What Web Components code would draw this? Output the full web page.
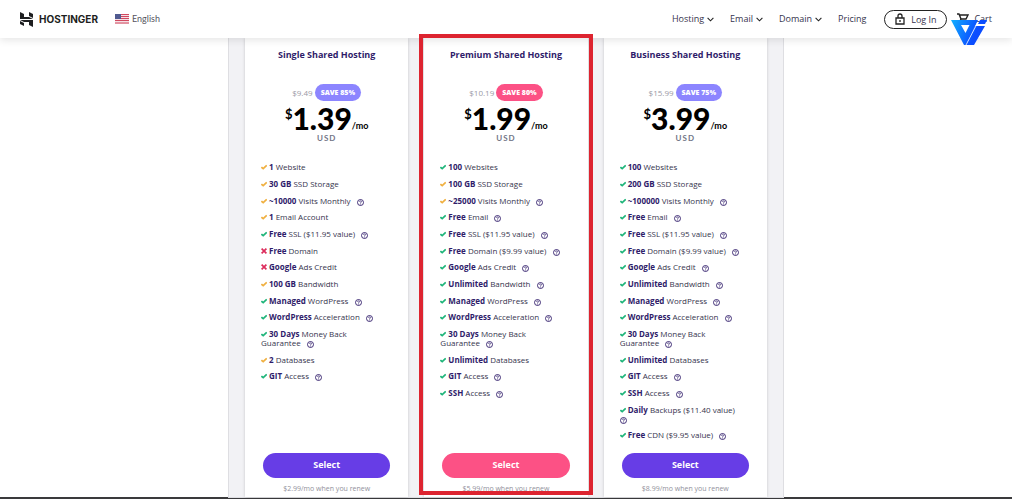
<!DOCTYPE html>
<html lang="en">
<head>
<meta charset="utf-8">
<title>Hosting plans</title>
<style>
html,body{margin:0;background:#fff}
body{font-family:"Open Sans","Noto Sans",sans-serif;color:#2f1c6a}
</style>
</head>
<body>
<hosting-page></hosting-page>
<script>
const define=(name,html,setup)=>customElements.define(name,class extends HTMLElement{
  constructor(){super();this.attachShadow({mode:'open'});}
  connectedCallback(){
    if(this.shadowRoot.childNodes.length)return;
    const t=document.createElement('template');
    t.innerHTML=typeof html==='function'?html(this):html;
    this.shadowRoot.append(t.content.cloneNode(true));
    if(setup)setup(this);
  }
});

define('status-mark',el=>{
  const kind=el.getAttribute('kind');
  return `<style>:host{display:inline-block;width:8px;height:6px}
  svg{display:block;width:6px;height:6px;fill:none;stroke-width:1.7}
  .ok{stroke:#1fb57a}.warn{stroke:#f0b040}.no{stroke:#dc2c5c}</style>
  <svg class="${kind}" viewBox="0 0 6 6" aria-hidden="true"><path d="${kind==='no'?'M.6.6 5.4 5.4M5.4.6.6 5.4':'M.4 3.1 2.2 4.7 5.7 1.3'}"/></svg>`;
});

define('help-dot',`<style>:host{display:inline-block;width:7px;height:7px;margin:-2px 0 -2px 4px}
  :host([alone]){margin-left:0}
  svg{display:block;width:7px;height:7px;fill:none;stroke:#2f1c6a}</style>
  <svg viewBox="0 0 14 14" aria-hidden="true"><circle cx="7" cy="7" r="6" stroke-width="1.8"/><path d="M5 5.6Q5.2 3.8 7 3.8T9 5.6Q9 6.6 7 7.6V8.6M7 9.6V11" stroke-width="1.5"/></svg>`);

define('nav-item',el=>`<style>:host{display:block}
  a{display:flex;align-items:center;gap:3px;color:#36344d;text-decoration:none;font-size:9px;line-height:12px}
  svg{width:7px;height:5px;fill:none;stroke:#222;stroke-width:1.1}</style>
  <a href="#"><slot></slot>${el.hasAttribute('menu')?'<svg viewBox="0 0 7 5" aria-hidden="true"><path d="M.6.8 3.5 3.8 6.4.8"/></svg>':''}</a>`);

define('site-header',`<style>
  :host{display:block;position:relative;z-index:2;background:#fff;box-shadow:0 2px 8px #0000001c}
  header{display:flex;align-items:center;height:38px;padding:0 20px}
  a{color:inherit;text-decoration:none}
  .brand{display:flex;align-items:center;gap:5px;font:700 10px/12px Inter,sans-serif;color:#1d1e20}
  .brand svg{width:14px;height:15px;display:block}
  .lang{display:flex;align-items:center;gap:3px;margin-left:17px;font:9px/12px Lato,sans-serif;color:#56555f}
  .lang svg{width:14px;height:10px;display:block}
  nav{display:flex;align-items:center;gap:16px;margin-left:auto}
  button{display:flex;align-items:center;justify-content:center;gap:6px;width:63px;height:19px;margin-left:2px;box-sizing:border-box;padding:0;border:1px solid #222;border-radius:10px;background:#fff;color:#36344d;font:inherit;font-size:9px}
  button svg{width:10px;height:12px;fill:none;stroke:#222;stroke-width:1.3}
  .cart{display:flex;align-items:center;gap:5px;font-size:9px;line-height:12px;color:#36344d;margin-left:-6px}
  .cart svg{width:12px;height:12px;fill:none;stroke:#222;stroke-width:1.4}
  </style>
  <header>
   <a class="brand" href="#"><svg viewBox="0 0 14 15" fill="#1d1e20" aria-hidden="true"><path d="M0 0 4 2V5H9L13 7H0ZM9 0 13 2V6L9 4ZM0 8H13V15L9 13V10H4L0 8ZM0 9 4 11V14L0 12Z"/></svg><span>HOSTINGER</span></a>
   <a class="lang" href="#"><svg viewBox="0 0 14 10" aria-hidden="true"><path fill="#f4dfe4" d="M0 0H14V10H0Z"/><path stroke="#d2485f" d="M0 .5H14M0 2.5H14M0 4.5H14M0 6.5H14M0 9H14"/><path fill="#505a90" d="M0 0H6V5H0Z"/></svg><span>English</span></a>
   <nav aria-label="Main"><nav-item menu>Hosting</nav-item><nav-item menu>Email</nav-item><nav-item menu>Domain</nav-item><nav-item>Pricing</nav-item>
   <button type="button"><svg viewBox="0 0 10 12" aria-hidden="true"><path d="M1 5H9V11H1ZM3 5V3Q3 1 5 1T7 3V5M5 7V9"/></svg>Log In</button>
   <a class="cart" href="#"><svg viewBox="0 0 12 12" aria-hidden="true"><path d="M0 1H2L4 6H9L11 2H3M4 6 3 8H10"/><circle cx="4" cy="10.4" r=".8"/><circle cx="9" cy="10.4" r=".8"/></svg>Cart</a></nav>
  </header>`);

define('plan-card',`<style>
  :host{display:flex;flex-direction:column;background:#fff;box-shadow:0 0 3px #0000002e;box-sizing:border-box;padding:10px 16px 0;text-align:center;--accent:#673de6;--badge:#8c85ff}
  :host([featured]){--accent:#fc5185;--badge:#fc5185}
  h2{margin:0 -16px;font-size:9px;line-height:14px;font-weight:700;color:#2f1c6a}
  .deal{display:flex;justify-content:center;align-items:center;gap:2px;margin-top:22px;font-size:8px;line-height:17px;color:#9a99a5}
  .deal s{text-decoration:none}
  .badge{background:var(--badge);color:#fff;border-radius:9px;padding:0 6px;font-size:7px;font-weight:800}
  .price{display:flex;justify-content:center;color:#000;line-height:28px;margin-top:3px;font-family:Lato,sans-serif}
  .cur{font-size:13px;font-weight:700;line-height:20px}
  .sum{font-size:30px;font-weight:900}
  .per{font-size:9px;font-weight:700;align-self:flex-end;line-height:12px}
  .usd{font:700 8px/10px Lato,sans-serif;margin-top:1px;color:#727586;letter-spacing:1px}
  ul{list-style:none;margin:19px 0 0;padding:0;text-align:left;font-size:8px;line-height:9px;color:#36344d;flex:1}
  li{padding-bottom:8px}
  li:nth-child(3n){padding-bottom:7px}
  b{color:#2f1c6a}
  button{margin:0 2px;height:25px;border:0;border-radius:13px;background:var(--accent);color:#fff;font:inherit;font-size:9px;line-height:23px;font-weight:700;padding:0 0 2px}
  small{font-size:7px;line-height:10px;margin:6px 0 3px;color:#92919c}
  </style>
  <h2><slot></slot></h2>
  <div class="deal"><s></s><span class="badge"></span></div>
  <div class="price"><span class="cur">$</span><span class="sum"></span><span class="per">/mo</span></div>
  <div class="usd">USD</div>
  <ul></ul>
  <button type="button">Select</button>
  <small></small>`,el=>{
    const q=s=>el.shadowRoot.querySelector(s),p=plans[el.getAttribute('plan')];
    q('s').textContent=p.was;
    q('.badge').textContent=p.save;q('.sum').textContent=p.price;q('small').textContent=p.renew+'/mo when you renew';
    q('ul').innerHTML=p.rows.map(r=>{
      const [k,b,t,h]=r.split('|');
      const dot={'?':' <help-dot></help-dot>','below':'<br><help-dot alone></help-dot>'}[h]||'';
      return `<li><status-mark kind="${{g:'ok',y:'warn',x:'no'}[k]}"></status-mark><b>${b}</b> ${t}${dot}</li>`;
    }).join('');
});

const plans={
 single:{was:'$9.49',save:'SAVE 85%',price:'1.39',renew:'$2.99',rows:['y|1|Website','y|30 GB|SSD Storage','y|~10000|Visits Monthly|?','y|1|Email Account','g|Free|SSL ($11.95 value)|?','x|Free|Domain','x|Google|Ads Credit','y|100 GB|Bandwidth','g|Managed|WordPress|?','g|WordPress|Acceleration|?','g|30 Days|Money Back<br>Guarantee|?','y|2|Databases','g|GIT|Access|?']},
 premium:{was:'$10.19',save:'SAVE 80%',price:'1.99',renew:'$5.99',rows:['g|100|Websites','y|100 GB|SSD Storage','y|~25000|Visits Monthly|?','g|Free|Email|?','g|Free|SSL ($11.95 value)|?','g|Free|Domain ($9.99 value)|?','g|Google|Ads Credit|?','g|Unlimited|Bandwidth|?','g|Managed|WordPress|?','g|WordPress|Acceleration|?','g|30 Days|Money Back<br>Guarantee|?','g|Unlimited|Databases','g|GIT|Access|?','g|SSH|Access|?']},
 business:{was:'$15.99',save:'SAVE 75%',price:'3.99',renew:'$8.99',rows:['g|100|Websites','g|200 GB|SSD Storage','g|~100000|Visits Monthly|?','g|Free|Email|?','g|Free|SSL ($11.95 value)|?','g|Free|Domain ($9.99 value)|?','g|Google|Ads Credit|?','g|Unlimited|Bandwidth|?','g|Managed|WordPress|?','g|WordPress|Acceleration|?','g|30 Days|Money Back<br>Guarantee|?','g|Unlimited|Databases','g|GIT|Access|?','g|SSH|Access|?','g|Daily|Backups ($11.40 value)|below','g|Free|CDN ($9.95 value)|?']}
};

define('corner-mark',`<style>:host{display:block;position:absolute;z-index:4;top:20px;right:24px}svg{display:block;width:37px;height:26px}</style>
  <svg viewBox="0 0 37 26" aria-hidden="true"><defs><linearGradient id="g" gradientUnits="userSpaceOnUse" x1="0" y1="0" x2="34" y2="14"><stop offset="0" stop-color="#12b0ff"/><stop offset=".75" stop-color="#0b4dff"/></linearGradient></defs>
  <path fill="url(#g)" fill-rule="evenodd" d="M0 0H27L15 25H13ZM10 5 14.5 13 18.500 5ZM24 6H34L23 25H15ZM29 0H36L34 4H27Z"/><path d="M27 2 15 25" stroke="#fff" stroke-width=".8"/></svg>`);

define('hosting-page',`<style>
  :host{display:flex;flex-direction:column;position:relative;min-height:100vh;overflow:hidden}
  main{flex:1;display:flex;justify-content:center}
  .plans{position:relative;display:grid;grid-template-columns:repeat(3,1fr);gap:16px;width:100%;max-width:554px;box-sizing:border-box;padding:0 16px;background:#f2f2f5;box-shadow:0 0 0 1px #dedee2}
  .edge{height:2px;background:#3a3a3c}
  .focus{position:absolute;z-index:3;top:-4px;bottom:2px;left:190px;right:190px;border:4px solid #dd2430;pointer-events:none}
  </style>
  <site-header></site-header>
  <main><div class="plans">
    <plan-card plan="single">Single Shared Hosting</plan-card>
    <plan-card plan="premium" featured>Premium Shared Hosting</plan-card>
    <plan-card plan="business">Business Shared Hosting</plan-card>
    <div class="focus"></div>
  </div></main>
  <div class="edge"></div>
  <corner-mark></corner-mark>`);
</script>
</body>
</html>
